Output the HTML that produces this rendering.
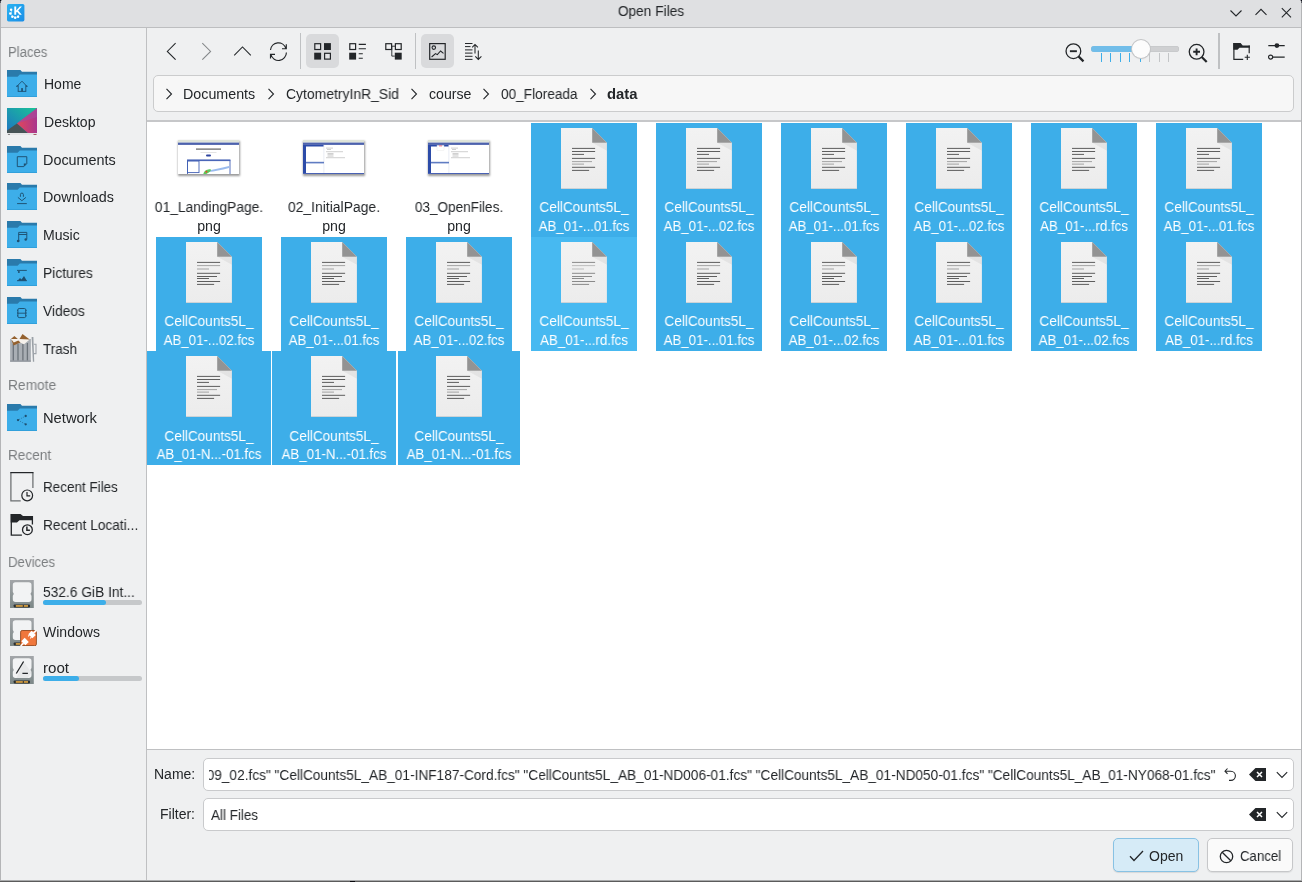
<!DOCTYPE html><html><head><meta charset="utf-8"><style>
html,body{margin:0;padding:0;width:1302px;height:882px;overflow:hidden;background:#eff0f1}
#w{position:relative;width:1302px;height:882px;overflow:hidden;font-family:"Liberation Sans",sans-serif}
.t{position:absolute;white-space:nowrap;line-height:20px;height:20px;font-size:14px;will-change:transform}
.r{position:absolute;display:block}
</style></head><body><div id="w">
<div class="r" style="left:0px;top:0px;width:1302px;height:882px;background:#eff0f1;"></div>
<div class="r" style="left:0px;top:0px;width:1302px;height:27px;background:#dfe0e2;"></div>
<div class="r" style="left:0px;top:27px;width:1302px;height:1px;background:#bdbec0;"></div>
<div class="r" style="left:0px;top:0px;width:1px;height:882px;background:#b4b5b7;"></div>
<div class="r" style="left:1301px;top:0px;width:1px;height:882px;background:#b4b5b7;"></div>
<div class="r" style="left:0px;top:880px;width:1302px;height:1px;background:#a9aaab;"></div>
<div class="r" style="left:0px;top:881px;width:1302px;height:1px;background:#5b5b5b;"></div>
<div class="r" style="left:0px;top:0px;width:1px;height:1px;background:#0b0c18;"></div>
<div class="r" style="left:1px;top:0px;width:1px;height:1px;background:#9a9ca0;"></div>
<div class="r" style="left:0px;top:1px;width:1px;height:2px;background:#55575d;"></div>
<div class="r" style="left:1301px;top:0px;width:1px;height:1px;background:#0b0c18;"></div>
<div class="r" style="left:1300px;top:0px;width:1px;height:1px;background:#9a9ca0;"></div>
<div class="r" style="left:1301px;top:1px;width:1px;height:2px;background:#55575d;"></div>
<div class="r" style="left:350px;top:881px;width:5px;height:1px;background:#08080c;"></div>
<div class="t" style="left:501px;width:300px;text-align:center;top:1px;color:#232629;font-weight:normal;transform:scaleX(0.9808);transform-origin:150px 0;">Open Files</div>
<svg class="r" style="left:7px;top:4px" width="18" height="18" viewBox="0 0 18 18"><defs><linearGradient id="kg" x1="0" y1="0" x2="1" y2="1"><stop offset="0" stop-color="#2bb4f2"/><stop offset="1" stop-color="#1a8de6"/></linearGradient></defs>
<rect x="0" y="0" width="17.4" height="17.4" rx="1.6" fill="url(#kg)"/>
<path d="M4.6 7.2A3.9 3.9 0 0 0 11.8 11" fill="none" stroke="#fff" stroke-width="0.9" opacity="0.6"/>
<circle cx="4.10" cy="5.83" r="1.25" fill="#fff"/><circle cx="3.28" cy="9.57" r="1.25" fill="#fff"/><circle cx="5.33" cy="12.80" r="1.25" fill="#fff"/><circle cx="8.20" cy="13.70" r="1.25" fill="#fff"/><circle cx="11.07" cy="12.80" r="1.25" fill="#fff"/>
<path d="M7.3 2.6h1.9v3.9l3.6-3.9h2.1L11.2 6.6l3.6 4.2h-2.2L10 7.7 9.2 8.5v2.3H7.3z" fill="#fff"/></svg>
<svg class="r" style="left:1228px;top:6px" width="16" height="16" viewBox="0 0 16 16"><path d="M2.5 4.5l5.5 5.5 5.5-5.5" fill="none" stroke="#232629" stroke-width="1.1"/></svg>
<svg class="r" style="left:1253px;top:4px" width="16" height="16" viewBox="0 0 16 16"><path d="M2.5 10.8l5.5-5.5 5.5 5.5" fill="none" stroke="#232629" stroke-width="1.1"/></svg>
<svg class="r" style="left:1278px;top:4px" width="16" height="16" viewBox="0 0 16 16"><path d="M3.8 4.2l9.2 9.2M13 4.2l-9.2 9.2" fill="none" stroke="#232629" stroke-width="1.1"/></svg>
<div class="r" style="left:146px;top:28px;width:1px;height:852px;background:#bfc0c2;"></div>
<div class="t" style="left:7.70px;top:42px;color:#7b7e80;font-weight:normal;transform:scaleX(0.9357);transform-origin:0 0;">Places</div>
<svg class="r" style="left:7px;top:70px" width="30" height="28" viewBox="0 0 30 28"><path d="M0 0h13.4l1.6 1.7H30V27H0z" fill="#2a7aab"/>
<path d="M0 6.7h10.6l2.2-2.2H30V27H0z" fill="#3daee9"/><rect x="0" y="26.3" width="30" height="0.7" fill="#2d9ad6"/><path d="M9.9 16.3L15 11.2l4.9 5.1M11.2 15.2v6.2M18.8 15.2v6.2M10.8 21.4h8.4" fill="none" stroke="#1e4f70" stroke-width="0.9"/><rect x="14.2" y="18.1" width="1.7" height="3.3" fill="#1e4f70"/><circle cx="10" cy="16.3" r="0.8" fill="#1e4f70"/><circle cx="19.8" cy="16.3" r="0.8" fill="#1e4f70"/></svg>
<svg class="r" style="left:7px;top:108px" width="30" height="28" viewBox="0 0 30 28"><defs><linearGradient id="dg" x1="0" y1="1" x2="1" y2="0"><stop offset="0" stop-color="#1e74c4"/><stop offset="1" stop-color="#19c496"/></linearGradient>
<linearGradient id="dp" x1="0" y1="0" x2="1" y2="0"><stop offset="0" stop-color="#e3475a"/><stop offset="1" stop-color="#a9368e"/></linearGradient></defs>
<rect width="30" height="25" fill="url(#dg)"/>
<path d="M30 0.3L9.9 15.6 20.7 25H30z" fill="url(#dp)"/>
<path d="M30 0.3L9.9 15.6 30 9z" fill="#a8489a" opacity="0.75"/>
<path d="M0 22.5L9.9 15.6 20.7 25H0z" fill="#475456"/>
<rect y="25" width="30" height="2" fill="#e4e5e6"/><rect x="1" y="26" width="2" height="1" fill="#888"/><rect x="26.5" y="26" width="3" height="1" fill="#a56"/></svg>
<svg class="r" style="left:7px;top:146px" width="30" height="28" viewBox="0 0 30 28"><path d="M0 0h13.4l1.6 1.7H30V27H0z" fill="#2a7aab"/>
<path d="M0 6.7h10.6l2.2-2.2H30V27H0z" fill="#3daee9"/><rect x="0" y="26.3" width="30" height="0.7" fill="#2d9ad6"/><path d="M10.3 10.7v9.9h6.5l3-3v-6.9M10.3 10.7h9.5" fill="none" stroke="#1e4f70" stroke-width="0.95"/><path d="M16.8 20.6v-3h3z" fill="#1e4f70"/></svg>
<svg class="r" style="left:7px;top:183px" width="30" height="28" viewBox="0 0 30 28"><path d="M0 0h13.4l1.6 1.7H30V27H0z" fill="#2a7aab"/>
<path d="M0 6.7h10.6l2.2-2.2H30V27H0z" fill="#3daee9"/><rect x="0" y="26.3" width="30" height="0.7" fill="#2d9ad6"/><path d="M13.4 13.8v-2.2a1.5 1.5 0 0 1 3 0v2.2M10.9 14.4l4 3.3 4-3.3M10.1 20.6h9.7" fill="none" stroke="#1e4f70" stroke-width="0.95"/></svg>
<svg class="r" style="left:7px;top:221px" width="30" height="28" viewBox="0 0 30 28"><path d="M0 0h13.4l1.6 1.7H30V27H0z" fill="#2a7aab"/>
<path d="M0 6.7h10.6l2.2-2.2H30V27H0z" fill="#3daee9"/><rect x="0" y="26.3" width="30" height="0.7" fill="#2d9ad6"/><path d="M11.7 20V11.4h8.1v7M11.7 13.5h8.1" fill="none" stroke="#1e4f70" stroke-width="0.95"/><circle cx="11.2" cy="20" r="1.35" fill="#1e4f70"/><circle cx="18.7" cy="18.5" r="1.25" fill="#1e4f70"/></svg>
<svg class="r" style="left:7px;top:259px" width="30" height="28" viewBox="0 0 30 28"><path d="M0 0h13.4l1.6 1.7H30V27H0z" fill="#2a7aab"/>
<path d="M0 6.7h10.6l2.2-2.2H30V27H0z" fill="#3daee9"/><rect x="0" y="26.3" width="30" height="0.7" fill="#2d9ad6"/><path d="M10 11.4h9.8M10 21.7h9.8" fill="none" stroke="#1e4f70" stroke-width="0.95"/><circle cx="11.9" cy="12.9" r="1" fill="#1e4f70"/><path d="M10.5 21.7l2.5-2.7 1.5 1.5 2.5-3.5 2.8 4.7z" fill="#1e4f70"/></svg>
<svg class="r" style="left:7px;top:297px" width="30" height="28" viewBox="0 0 30 28"><path d="M0 0h13.4l1.6 1.7H30V27H0z" fill="#2a7aab"/>
<path d="M0 6.7h10.6l2.2-2.2H30V27H0z" fill="#3daee9"/><rect x="0" y="26.3" width="30" height="0.7" fill="#2d9ad6"/><rect x="10.9" y="11.5" width="7.8" height="9.1" rx="1.3" fill="none" stroke="#1e4f70" stroke-width="0.95"/><path d="M10.9 16.2h7.8M10 13.3h1M10 16h1M10 18.8h1M18.8 13.3h1M18.8 16h1M18.8 18.8h1" stroke="#1e4f70" stroke-width="0.9"/></svg>
<svg class="r" style="left:9px;top:333px" width="28" height="30" viewBox="0 0 28 30"><path d="M1.1 6h20.8v22.6H1.1z" fill="#a9aeb4"/>
<path d="M4.3 11v16.5M9 11v16.5M13.9 11v16.5M18.4 10v17.5" stroke="#6c737a" stroke-width="1.3"/>
<rect x="1.1" y="27.6" width="20.8" height="1" fill="#858b92"/>
<path d="M22.6 4.1h1.8l0.8 24.7h-1.3z" fill="#9aa0a6"/>
<path d="M24.8 11.2h2.2v9.4h-2.2" fill="none" stroke="#9ea4aa" stroke-width="1.1"/>
<path d="M2 6l16-0.2 2.7 0.6-5.7 4.9-4-1.8-5.5 1.5-2.7-3.5z" fill="#f5f1ec"/>
<path d="M1.9 6l3.5-2.9 3.4 2.9z" fill="#94612f"/>
<path d="M10.5 5.9l3-4.8 7.2 5.3z" fill="#94612f"/>
<path d="M2.3 6.3l2.2 6.2 7-3.1-2.2-2-4.5 2.2z" fill="#94612f"/></svg>
<div class="t" style="left:43.60px;top:74px;color:#232629;font-weight:normal;transform:scaleX(1.0);transform-origin:0 0;">Home</div>
<div class="t" style="left:43.60px;top:112px;color:#232629;font-weight:normal;transform:scaleX(1.0019);transform-origin:0 0;">Desktop</div>
<div class="t" style="left:43.40px;top:150px;color:#232629;font-weight:normal;transform:scaleX(1.0282);transform-origin:0 0;">Documents</div>
<div class="t" style="left:43.40px;top:187px;color:#232629;font-weight:normal;transform:scaleX(1.0231);transform-origin:0 0;">Downloads</div>
<div class="t" style="left:43.40px;top:225px;color:#232629;font-weight:normal;transform:scaleX(1.0055);transform-origin:0 0;">Music</div>
<div class="t" style="left:43.40px;top:263px;color:#232629;font-weight:normal;transform:scaleX(0.9862);transform-origin:0 0;">Pictures</div>
<div class="t" style="left:43.20px;top:301px;color:#232629;font-weight:normal;transform:scaleX(0.9836);transform-origin:0 0;">Videos</div>
<div class="t" style="left:43.20px;top:339px;color:#232629;font-weight:normal;transform:scaleX(0.9632);transform-origin:0 0;">Trash</div>
<div class="t" style="left:7.90px;top:375px;color:#7b7e80;font-weight:normal;transform:scaleX(0.9837);transform-origin:0 0;">Remote</div>
<svg class="r" style="left:7px;top:404px" width="30" height="28" viewBox="0 0 30 28"><path d="M0 0h13.4l1.6 1.7H30V27H0z" fill="#2a7aab"/>
<path d="M0 6.7h10.6l2.2-2.2H30V27H0z" fill="#3daee9"/><rect x="0" y="26.3" width="30" height="0.7" fill="#2d9ad6"/><path d="M18.7 12L11 16.1l7.7 4.2" fill="none" stroke="#1e4f70" stroke-width="0.7" stroke-dasharray="1 1.2" opacity="0.8"/><circle cx="18.7" cy="12" r="1.15" fill="#1e4f70"/><circle cx="11" cy="16.1" r="1.15" fill="#1e4f70"/><circle cx="18.7" cy="20.3" r="1.15" fill="#1e4f70"/></svg>
<div class="t" style="left:43.40px;top:408px;color:#232629;font-weight:normal;transform:scaleX(1.0506);transform-origin:0 0;">Network</div>
<div class="t" style="left:7.70px;top:445px;color:#7b7e80;font-weight:normal;transform:scaleX(0.9707);transform-origin:0 0;">Recent</div>
<svg class="r" style="left:10px;top:472px" width="24" height="31" viewBox="0 0 24 31"><path d="M0.9 0.6V28.8H10.7M22.9 0.6V16" fill="none" stroke="#6b6e71" stroke-width="1.25"/>
<path d="M0.3 0.6H23.5" fill="none" stroke="#232629" stroke-width="1.25"/>
<circle cx="17.2" cy="23.4" r="5.4" fill="none" stroke="#232629" stroke-width="1.2"/><path d="M17 20V23.8H20.2" fill="none" stroke="#232629" stroke-width="1.2"/></svg>
<div class="t" style="left:43.40px;top:477px;color:#232629;font-weight:normal;transform:scaleX(0.9614);transform-origin:0 0;">Recent Files</div>
<svg class="r" style="left:10px;top:514px" width="24" height="23" viewBox="0 0 24 23"><path d="M0.7 0H10.5L13 2H23V6.2H9.5L7 8.5H0.7Z" fill="#232629"/>
<path d="M1.3 0V21.2H11.9M22.4 2V10.4" fill="none" stroke="#232629" stroke-width="1.3"/>
<circle cx="17.4" cy="15.7" r="4.9" fill="none" stroke="#232629" stroke-width="1.3"/><path d="M16.9 12.6V16.2H19.9" fill="none" stroke="#232629" stroke-width="1.5"/></svg>
<div class="t" style="left:43.40px;top:515px;color:#232629;font-weight:normal;transform:scaleX(0.9784);transform-origin:0 0;">Recent Locati...</div>
<div class="t" style="left:8.20px;top:552px;color:#7b7e80;font-weight:normal;transform:scaleX(0.9458);transform-origin:0 0;">Devices</div>
<svg class="r" style="left:10px;top:580px" width="28" height="28" viewBox="0 0 28 28"><defs><linearGradient id="dvg" x1="0" y1="0" x2="0" y2="1"><stop offset="0" stop-color="#a3a6a9"/><stop offset="1" stop-color="#7d8888"/></linearGradient></defs>
<rect x="0" y="0" width="23.8" height="28" fill="url(#dvg)"/>
<path d="M5.5 2.2h13.3a2.7 2.7 0 0 1 2.7 2.7v6.5c0 1-0.9 1.4-0.9 2.4s0.9 1.4 0.9 2.4v3a2.7 2.7 0 0 1-2.7 2.7H5.5a2.7 2.7 0 0 1-2.7-2.7v-3c0-1 0.9-1.4 0.9-2.4s-0.9-1.4-0.9-2.4V4.9a2.7 2.7 0 0 1 2.7-2.7z" fill="#f2f3f4"/>
<rect x="3.7" y="24.5" width="16.3" height="2.9" rx="0.8" fill="#2a2e30"/>
<rect x="5.8" y="25.1" width="7" height="1.7" fill="#d9a040"/><rect x="13.8" y="25.1" width="4.2" height="1.7" fill="#d9a040"/></svg>
<div class="t" style="left:43.40px;top:582px;color:#232629;font-weight:normal;transform:scaleX(0.9829);transform-origin:0 0;">532.6 GiB Int...</div>
<div class="r" style="left:43px;top:600px;width:99px;height:5px;background:#c6c8ca;border-radius:2.5px"></div>
<div class="r" style="left:43px;top:600px;width:62.5px;height:5px;background:#3daee9;border-radius:2.5px"></div>
<svg class="r" style="left:10px;top:618px" width="28" height="28" viewBox="0 0 28 28"><defs><linearGradient id="dvg" x1="0" y1="0" x2="0" y2="1"><stop offset="0" stop-color="#a3a6a9"/><stop offset="1" stop-color="#7d8888"/></linearGradient></defs>
<rect x="0" y="0" width="23.8" height="28" fill="url(#dvg)"/>
<path d="M5.5 2.2h13.3a2.7 2.7 0 0 1 2.7 2.7v6.5c0 1-0.9 1.4-0.9 2.4s0.9 1.4 0.9 2.4v3a2.7 2.7 0 0 1-2.7 2.7H5.5a2.7 2.7 0 0 1-2.7-2.7v-3c0-1 0.9-1.4 0.9-2.4s-0.9-1.4-0.9-2.4V4.9a2.7 2.7 0 0 1 2.7-2.7z" fill="#f2f3f4"/>
<rect x="3.7" y="24.5" width="16.3" height="2.9" rx="0.8" fill="#2a2e30"/>
<rect x="5.8" y="25.1" width="7" height="1.7" fill="#d9a040"/><rect x="13.8" y="25.1" width="4.2" height="1.7" fill="#d9a040"/><rect x="10.6" y="12.5" width="15.8" height="15.2" rx="1.6" fill="#f0773c" stroke="#93481d" stroke-width="0.9"/><g fill="#fff" transform="translate(18.5 20.1) rotate(45)"><rect x="-2.9" y="-7.4" width="5.8" height="4.8"/><rect x="-0.8" y="-11" width="1.6" height="4"/><rect x="-2" y="-2.7" width="1.1" height="1.7"/><rect x="0.9" y="-2.7" width="1.1" height="1.7"/><rect x="-2.9" y="2.5" width="5.8" height="4.8"/><rect x="-0.8" y="7.1" width="1.6" height="4"/></g></svg>
<div class="t" style="left:43.40px;top:622px;color:#232629;font-weight:normal;transform:scaleX(1.0018);transform-origin:0 0;">Windows</div>
<svg class="r" style="left:10px;top:656px" width="28" height="28" viewBox="0 0 28 28"><defs><linearGradient id="dvg" x1="0" y1="0" x2="0" y2="1"><stop offset="0" stop-color="#a3a6a9"/><stop offset="1" stop-color="#7d8888"/></linearGradient></defs>
<rect x="0" y="0" width="23.8" height="28" fill="url(#dvg)"/>
<path d="M5.5 2.2h13.3a2.7 2.7 0 0 1 2.7 2.7v6.5c0 1-0.9 1.4-0.9 2.4s0.9 1.4 0.9 2.4v3a2.7 2.7 0 0 1-2.7 2.7H5.5a2.7 2.7 0 0 1-2.7-2.7v-3c0-1 0.9-1.4 0.9-2.4s-0.9-1.4-0.9-2.4V4.9a2.7 2.7 0 0 1 2.7-2.7z" fill="#f2f3f4"/>
<rect x="3.7" y="24.5" width="16.3" height="2.9" rx="0.8" fill="#2a2e30"/>
<rect x="5.8" y="25.1" width="7" height="1.7" fill="#d9a040"/><rect x="13.8" y="25.1" width="4.2" height="1.7" fill="#d9a040"/><path d="M13.6 5.5L21.5 16.5 18 21.9H6.5z" fill="#000" opacity="0.045"/><path d="M13.6 5.5L6.3 17.5M12.4 17.3h5.5" stroke="#232629" stroke-width="1.3" fill="none"/></svg>
<div class="t" style="left:43.40px;top:658px;color:#232629;font-weight:normal;transform:scaleX(1.0788);transform-origin:0 0;">root</div>
<div class="r" style="left:43px;top:676px;width:99px;height:4.5px;background:#c6c8ca;border-radius:2.5px"></div>
<div class="r" style="left:43px;top:676px;width:35.5px;height:4.5px;background:#3daee9;border-radius:2.5px"></div>
<svg class="r" style="left:162px;top:42px" width="18" height="18" viewBox="0 0 18 18"><path d="M13.6 1.1L5.3 9.4l8.3 8.3" fill="none" stroke="#232629" stroke-width="1.05"/></svg>
<svg class="r" style="left:197px;top:42px" width="18" height="18" viewBox="0 0 18 18"><path d="M5.3 1.1l8.3 8.3-8.3 8.3" fill="none" stroke="#85888b" stroke-width="1.05"/></svg>
<svg class="r" style="left:232px;top:42px" width="20" height="18" viewBox="0 0 20 18"><path d="M2.2 13.3l8.3-8.3 8.3 8.3" fill="none" stroke="#232629" stroke-width="1.05"/></svg>
<svg class="r" style="left:266px;top:40px" width="24" height="22" viewBox="0 0 24 22"><path d="M4.5 10A7.9 7.9 0 0 1 19.9 8.4M20.3 4.2V8.7H16M20.4 12.5A7.9 7.9 0 0 1 4.9 14.7M4.5 18.5V14.3H9" fill="none" stroke="#232629" stroke-width="1.15"/></svg>
<div class="r" style="left:300px;top:33px;width:1px;height:36px;background:#bfc1c3;"></div>
<div class="r" style="left:306px;top:34px;width:33px;height:34px;background:#d9dadc;border-radius:5px"></div>
<svg class="r" style="left:314px;top:43px" width="18" height="18" viewBox="0 0 18 18"><rect x="0.8" y="0.7" width="5.8" height="5.8" fill="#e3e4e6" stroke="#232629" stroke-width="1.2"/><rect x="10" y="0.1" width="6.9" height="6.9" fill="#232629"/><rect x="0.2" y="9.7" width="6.9" height="6.9" fill="#232629"/><rect x="10.6" y="10.3" width="5.8" height="5.8" fill="#e3e4e6" stroke="#232629" stroke-width="1.2"/></svg>
<svg class="r" style="left:349px;top:43px" width="18" height="18" viewBox="0 0 18 18"><rect x="0.8" y="0.7" width="5.8" height="5.8" fill="none" stroke="#232629" stroke-width="1.2"/><rect x="0.2" y="9.7" width="6.9" height="6.9" fill="#232629"/><path d="M9.7 1.4h7.2M9.7 5.8h7.2M9.7 10.8h4.1M9.7 15.2h4.1" stroke="#232629" stroke-width="1.1"/></svg>
<svg class="r" style="left:385px;top:43px" width="18" height="18" viewBox="0 0 18 18"><rect x="0.8" y="0.7" width="5.8" height="5.8" fill="none" stroke="#232629" stroke-width="1.2"/><rect x="10.4" y="0.7" width="5.8" height="5.8" fill="none" stroke="#232629" stroke-width="1.2"/><rect x="9.8" y="9.7" width="6.9" height="6.9" fill="#232629"/><path d="M7 3.2h3M6.8 3.2v9.9h3" fill="none" stroke="#232629" stroke-width="0.9"/></svg>
<div class="r" style="left:415px;top:33px;width:1px;height:36px;background:#bfc1c3;"></div>
<div class="r" style="left:421px;top:34px;width:33px;height:34px;background:#d9dadc;border-radius:5px"></div>
<svg class="r" style="left:429px;top:43px" width="18" height="18" viewBox="0 0 18 18"><rect x="0.7" y="0.6" width="15.5" height="15.7" fill="none" stroke="#232629" stroke-width="1.2"/><circle cx="4.8" cy="4.6" r="1.75" fill="none" stroke="#232629" stroke-width="1.1"/><path d="M2.6 14l3.9-3.4 1.8 1 3.3-3.6 2.9 2.4" fill="none" stroke="#232629" stroke-width="1.05"/></svg>
<svg class="r" style="left:464px;top:43px" width="19" height="18" viewBox="0 0 19 18"><path d="M1 0.5h7.5M1 3.6h5.5M1 6.9h7.5M1 10.1h7.5M1 13.3h7.5M1 16.4h7.5" stroke="#232629" stroke-width="1"/><path d="M11 2v8.4M8.2 4.4L11 1.5l2.9 2.9M14.3 7.6v8.4M11.3 13.4l3 3 3.1-3" fill="none" stroke="#232629" stroke-width="1.05"/></svg>
<svg class="r" style="left:1064px;top:43px" width="21" height="21" viewBox="0 0 21 21"><circle cx="9.4" cy="8.2" r="7.35" fill="none" stroke="#232629" stroke-width="1.3"/><path d="M5.9 8.2h7" stroke="#232629" stroke-width="1.9"/><path d="M14.5 13.4l5 5" stroke="#232629" stroke-width="2.2"/></svg>
<svg class="r" style="left:1188px;top:43px" width="21" height="21" viewBox="0 0 21 21"><circle cx="8.6" cy="8.8" r="7.35" fill="none" stroke="#232629" stroke-width="1.3"/><path d="M5.2 8.8h6.8M8.6 5.4v6.8" stroke="#232629" stroke-width="1.9"/><path d="M13.7 14l5 5" stroke="#232629" stroke-width="2.2"/></svg>
<div class="r" style="left:1091px;top:46px;width:88px;height:6px;background:#cfd0d2;border-radius:3px;box-shadow:inset 0 0 0 0.5px #c2c3c5"></div>
<div class="r" style="left:1091px;top:46px;width:50px;height:6px;background:#71bde9;border-radius:3px"></div>
<div class="r" style="left:1101px;top:53px;width:1px;height:9px;background:#3daee9;"></div>
<div class="r" style="left:1110px;top:53px;width:1px;height:9px;background:#3daee9;"></div>
<div class="r" style="left:1120px;top:53px;width:1px;height:9px;background:#3daee9;"></div>
<div class="r" style="left:1129px;top:53px;width:1px;height:9px;background:#3daee9;"></div>
<div class="r" style="left:1140px;top:53px;width:1px;height:9px;background:#3daee9;"></div>
<div class="r" style="left:1149px;top:53px;width:1px;height:9px;background:#c3c5c7;"></div>
<div class="r" style="left:1159px;top:53px;width:1px;height:9px;background:#c3c5c7;"></div>
<div class="r" style="left:1168px;top:53px;width:1px;height:9px;background:#c3c5c7;"></div>
<div class="r" style="left:1131.5px;top:40px;width:18px;height:18px;background:#fcfcfc;border-radius:50%;box-shadow:0 0 0 1px #c4c5c7,0 1px 1.5px rgba(0,0,0,0.12)"></div>
<div class="r" style="left:1218px;top:33px;width:2px;height:36px;background:#bfc1c3;"></div>
<svg class="r" style="left:1233px;top:43px" width="19" height="18" viewBox="0 0 19 18"><path d="M0.3 0H7.6L9.7 2.4H16.8V4.7H6.5L4.5 6.8H0.3Z" fill="#232629"/><path d="M0.9 0V16.3H10.2M16.2 2.4V10.2" fill="none" stroke="#232629" stroke-width="1.2"/><path d="M14.3 11.7V16.9M11.7 14.3H16.9" stroke="#232629" stroke-width="1.1"/></svg>
<svg class="r" style="left:1267px;top:43px" width="19" height="18" viewBox="0 0 19 18"><path d="M1.3 2.6h16.4M5.7 14.1h12" stroke="#232629" stroke-width="1.1"/><circle cx="9.9" cy="2.6" r="2.4" fill="#232629"/><circle cx="3.6" cy="14.1" r="2.05" fill="#eff0f1" stroke="#232629" stroke-width="1.15"/></svg>
<div class="r" style="left:153px;top:75px;width:1141px;height:37px;background:#f7f7f7;box-sizing:border-box;border:1px solid #cbcccd;border-radius:5px"></div>
<svg class="r" style="left:164px;top:88px" width="10" height="12" viewBox="0 0 10 12"><path d="M2.5 0.8l5 5.2-5 5.2" fill="none" stroke="#232629" stroke-width="1.1"/></svg>
<svg class="r" style="left:266px;top:88px" width="10" height="12" viewBox="0 0 10 12"><path d="M2.5 0.8l5 5.2-5 5.2" fill="none" stroke="#232629" stroke-width="1.1"/></svg>
<svg class="r" style="left:409px;top:88px" width="10" height="12" viewBox="0 0 10 12"><path d="M2.5 0.8l5 5.2-5 5.2" fill="none" stroke="#232629" stroke-width="1.1"/></svg>
<svg class="r" style="left:481px;top:88px" width="10" height="12" viewBox="0 0 10 12"><path d="M2.5 0.8l5 5.2-5 5.2" fill="none" stroke="#232629" stroke-width="1.1"/></svg>
<svg class="r" style="left:588px;top:88px" width="10" height="12" viewBox="0 0 10 12"><path d="M2.5 0.8l5 5.2-5 5.2" fill="none" stroke="#232629" stroke-width="1.1"/></svg>
<div class="t" style="left:183.40px;top:84px;color:#232629;font-weight:normal;transform:scaleX(1.0198);transform-origin:0 0;">Documents</div>
<div class="t" style="left:286.00px;top:84px;color:#232629;font-weight:normal;transform:scaleX(0.9947);transform-origin:0 0;">CytometryInR_Sid</div>
<div class="t" style="left:428.60px;top:84px;color:#232629;font-weight:normal;transform:scaleX(1.0095);transform-origin:0 0;">course</div>
<div class="t" style="left:501.00px;top:84px;color:#232629;font-weight:normal;transform:scaleX(0.9746);transform-origin:0 0;">00_Floreada</div>
<div class="t" style="left:607.00px;top:84px;color:#232629;font-weight:bold;transform:scaleX(1.0588);transform-origin:0 0;">data</div>
<div class="r" style="left:147px;top:120px;width:1154px;height:2px;background:#c6c7c9;"></div>
<div class="r" style="left:147px;top:122px;width:1154px;height:627px;background:#ffffff;"></div>
<div class="r" style="left:147px;top:749px;width:1154px;height:1px;background:#bfc0c2;"></div>
<div class="t" style="left:59px;width:300px;text-align:center;top:197px;color:#232629;font-weight:normal;transform:scaleX(0.9863);transform-origin:150px 0;">01_LandingPage.</div>
<div class="t" style="left:59px;width:300px;text-align:center;top:216px;color:#232629;font-weight:normal;transform:scaleX(1.0128);transform-origin:150px 0;">png</div>
<div class="t" style="left:184px;width:300px;text-align:center;top:197px;color:#232629;font-weight:normal;transform:scaleX(0.9946);transform-origin:150px 0;">02_InitialPage.</div>
<div class="t" style="left:184px;width:300px;text-align:center;top:216px;color:#232629;font-weight:normal;transform:scaleX(1.0128);transform-origin:150px 0;">png</div>
<div class="t" style="left:309px;width:300px;text-align:center;top:197px;color:#232629;font-weight:normal;transform:scaleX(0.9682);transform-origin:150px 0;">03_OpenFiles.</div>
<div class="t" style="left:309px;width:300px;text-align:center;top:216px;color:#232629;font-weight:normal;transform:scaleX(1.0128);transform-origin:150px 0;">png</div>
<div class="r" style="left:531px;top:123px;width:106px;height:114px;background:#3daee9;"></div>
<svg class="r" style="left:561px;top:128px" width="47" height="62" viewBox="0 0 47 62"><defs><linearGradient id="pg" x1="0" y1="0" x2="0" y2="1"><stop offset="0" stop-color="#f2f2f2"/><stop offset="1" stop-color="#ececec"/></linearGradient></defs>
<path d="M0 0h31.2l14.7 14.7V60.7H0z" fill="url(#pg)"/>
<path d="M31.2 14.7h14.7v8z" fill="#000" opacity="0.05"/>
<path d="M31.2 0v14.7h14.7z" fill="#939393"/>
<rect x="0" y="60" width="45.9" height="0.7" fill="#d2cfcf"/><rect x="11" y="19.9" width="23.1" height="1" fill="#5e5e5e"/><rect x="11" y="23.0" width="23.1" height="1" fill="#5e5e5e"/><rect x="11" y="25.9" width="12" height="1" fill="#5e5e5e"/><rect x="11" y="29.9" width="23.1" height="1" fill="#5e5e5e"/><rect x="11" y="33.1" width="20" height="1" fill="#a3a3a3"/><rect x="11" y="35.6" width="12" height="1" fill="#a3a3a3"/><rect x="11" y="38.8" width="23.1" height="1" fill="#5e5e5e"/><rect x="11" y="41.9" width="17.1" height="1" fill="#5e5e5e"/></svg>
<div class="t" style="left:434px;width:300px;text-align:center;top:197px;color:#fff;font-weight:normal;transform:scaleX(0.9696);transform-origin:150px 0;">CellCounts5L_</div>
<div class="t" style="left:434px;width:300px;text-align:center;top:216px;color:#fff;font-weight:normal;transform:scaleX(0.9488);transform-origin:150px 0;">AB_01-...01.fcs</div>
<div class="r" style="left:656px;top:123px;width:106px;height:114px;background:#3daee9;"></div>
<svg class="r" style="left:686px;top:128px" width="47" height="62" viewBox="0 0 47 62"><defs><linearGradient id="pg" x1="0" y1="0" x2="0" y2="1"><stop offset="0" stop-color="#f2f2f2"/><stop offset="1" stop-color="#ececec"/></linearGradient></defs>
<path d="M0 0h31.2l14.7 14.7V60.7H0z" fill="url(#pg)"/>
<path d="M31.2 14.7h14.7v8z" fill="#000" opacity="0.05"/>
<path d="M31.2 0v14.7h14.7z" fill="#939393"/>
<rect x="0" y="60" width="45.9" height="0.7" fill="#d2cfcf"/><rect x="11" y="19.9" width="23.1" height="1" fill="#5e5e5e"/><rect x="11" y="23.0" width="23.1" height="1" fill="#5e5e5e"/><rect x="11" y="25.9" width="12" height="1" fill="#5e5e5e"/><rect x="11" y="29.9" width="23.1" height="1" fill="#5e5e5e"/><rect x="11" y="33.1" width="20" height="1" fill="#a3a3a3"/><rect x="11" y="35.6" width="12" height="1" fill="#a3a3a3"/><rect x="11" y="38.8" width="23.1" height="1" fill="#5e5e5e"/><rect x="11" y="41.9" width="17.1" height="1" fill="#5e5e5e"/></svg>
<div class="t" style="left:559px;width:300px;text-align:center;top:197px;color:#fff;font-weight:normal;transform:scaleX(0.9696);transform-origin:150px 0;">CellCounts5L_</div>
<div class="t" style="left:559px;width:300px;text-align:center;top:216px;color:#fff;font-weight:normal;transform:scaleX(0.9488);transform-origin:150px 0;">AB_01-...02.fcs</div>
<div class="r" style="left:781px;top:123px;width:106px;height:114px;background:#3daee9;"></div>
<svg class="r" style="left:811px;top:128px" width="47" height="62" viewBox="0 0 47 62"><defs><linearGradient id="pg" x1="0" y1="0" x2="0" y2="1"><stop offset="0" stop-color="#f2f2f2"/><stop offset="1" stop-color="#ececec"/></linearGradient></defs>
<path d="M0 0h31.2l14.7 14.7V60.7H0z" fill="url(#pg)"/>
<path d="M31.2 14.7h14.7v8z" fill="#000" opacity="0.05"/>
<path d="M31.2 0v14.7h14.7z" fill="#939393"/>
<rect x="0" y="60" width="45.9" height="0.7" fill="#d2cfcf"/><rect x="11" y="19.9" width="23.1" height="1" fill="#5e5e5e"/><rect x="11" y="23.0" width="23.1" height="1" fill="#5e5e5e"/><rect x="11" y="25.9" width="12" height="1" fill="#5e5e5e"/><rect x="11" y="29.9" width="23.1" height="1" fill="#5e5e5e"/><rect x="11" y="33.1" width="20" height="1" fill="#a3a3a3"/><rect x="11" y="35.6" width="12" height="1" fill="#a3a3a3"/><rect x="11" y="38.8" width="23.1" height="1" fill="#5e5e5e"/><rect x="11" y="41.9" width="17.1" height="1" fill="#5e5e5e"/></svg>
<div class="t" style="left:684px;width:300px;text-align:center;top:197px;color:#fff;font-weight:normal;transform:scaleX(0.9696);transform-origin:150px 0;">CellCounts5L_</div>
<div class="t" style="left:684px;width:300px;text-align:center;top:216px;color:#fff;font-weight:normal;transform:scaleX(0.9488);transform-origin:150px 0;">AB_01-...01.fcs</div>
<div class="r" style="left:906px;top:123px;width:106px;height:114px;background:#3daee9;"></div>
<svg class="r" style="left:936px;top:128px" width="47" height="62" viewBox="0 0 47 62"><defs><linearGradient id="pg" x1="0" y1="0" x2="0" y2="1"><stop offset="0" stop-color="#f2f2f2"/><stop offset="1" stop-color="#ececec"/></linearGradient></defs>
<path d="M0 0h31.2l14.7 14.7V60.7H0z" fill="url(#pg)"/>
<path d="M31.2 14.7h14.7v8z" fill="#000" opacity="0.05"/>
<path d="M31.2 0v14.7h14.7z" fill="#939393"/>
<rect x="0" y="60" width="45.9" height="0.7" fill="#d2cfcf"/><rect x="11" y="19.9" width="23.1" height="1" fill="#5e5e5e"/><rect x="11" y="23.0" width="23.1" height="1" fill="#5e5e5e"/><rect x="11" y="25.9" width="12" height="1" fill="#5e5e5e"/><rect x="11" y="29.9" width="23.1" height="1" fill="#5e5e5e"/><rect x="11" y="33.1" width="20" height="1" fill="#a3a3a3"/><rect x="11" y="35.6" width="12" height="1" fill="#a3a3a3"/><rect x="11" y="38.8" width="23.1" height="1" fill="#5e5e5e"/><rect x="11" y="41.9" width="17.1" height="1" fill="#5e5e5e"/></svg>
<div class="t" style="left:809px;width:300px;text-align:center;top:197px;color:#fff;font-weight:normal;transform:scaleX(0.9696);transform-origin:150px 0;">CellCounts5L_</div>
<div class="t" style="left:809px;width:300px;text-align:center;top:216px;color:#fff;font-weight:normal;transform:scaleX(0.9488);transform-origin:150px 0;">AB_01-...02.fcs</div>
<div class="r" style="left:1031px;top:123px;width:106px;height:114px;background:#3daee9;"></div>
<svg class="r" style="left:1061px;top:128px" width="47" height="62" viewBox="0 0 47 62"><defs><linearGradient id="pg" x1="0" y1="0" x2="0" y2="1"><stop offset="0" stop-color="#f2f2f2"/><stop offset="1" stop-color="#ececec"/></linearGradient></defs>
<path d="M0 0h31.2l14.7 14.7V60.7H0z" fill="url(#pg)"/>
<path d="M31.2 14.7h14.7v8z" fill="#000" opacity="0.05"/>
<path d="M31.2 0v14.7h14.7z" fill="#939393"/>
<rect x="0" y="60" width="45.9" height="0.7" fill="#d2cfcf"/><rect x="11" y="19.9" width="23.1" height="1" fill="#5e5e5e"/><rect x="11" y="23.0" width="23.1" height="1" fill="#5e5e5e"/><rect x="11" y="25.9" width="12" height="1" fill="#5e5e5e"/><rect x="11" y="29.9" width="23.1" height="1" fill="#5e5e5e"/><rect x="11" y="33.1" width="20" height="1" fill="#a3a3a3"/><rect x="11" y="35.6" width="12" height="1" fill="#a3a3a3"/><rect x="11" y="38.8" width="23.1" height="1" fill="#5e5e5e"/><rect x="11" y="41.9" width="17.1" height="1" fill="#5e5e5e"/></svg>
<div class="t" style="left:934px;width:300px;text-align:center;top:197px;color:#fff;font-weight:normal;transform:scaleX(0.9696);transform-origin:150px 0;">CellCounts5L_</div>
<div class="t" style="left:934px;width:300px;text-align:center;top:216px;color:#fff;font-weight:normal;transform:scaleX(0.9488);transform-origin:150px 0;">AB_01-...rd.fcs</div>
<div class="r" style="left:1156px;top:123px;width:106px;height:114px;background:#3daee9;"></div>
<svg class="r" style="left:1186px;top:128px" width="47" height="62" viewBox="0 0 47 62"><defs><linearGradient id="pg" x1="0" y1="0" x2="0" y2="1"><stop offset="0" stop-color="#f2f2f2"/><stop offset="1" stop-color="#ececec"/></linearGradient></defs>
<path d="M0 0h31.2l14.7 14.7V60.7H0z" fill="url(#pg)"/>
<path d="M31.2 14.7h14.7v8z" fill="#000" opacity="0.05"/>
<path d="M31.2 0v14.7h14.7z" fill="#939393"/>
<rect x="0" y="60" width="45.9" height="0.7" fill="#d2cfcf"/><rect x="11" y="19.9" width="23.1" height="1" fill="#5e5e5e"/><rect x="11" y="23.0" width="23.1" height="1" fill="#5e5e5e"/><rect x="11" y="25.9" width="12" height="1" fill="#5e5e5e"/><rect x="11" y="29.9" width="23.1" height="1" fill="#5e5e5e"/><rect x="11" y="33.1" width="20" height="1" fill="#a3a3a3"/><rect x="11" y="35.6" width="12" height="1" fill="#a3a3a3"/><rect x="11" y="38.8" width="23.1" height="1" fill="#5e5e5e"/><rect x="11" y="41.9" width="17.1" height="1" fill="#5e5e5e"/></svg>
<div class="t" style="left:1059px;width:300px;text-align:center;top:197px;color:#fff;font-weight:normal;transform:scaleX(0.9696);transform-origin:150px 0;">CellCounts5L_</div>
<div class="t" style="left:1059px;width:300px;text-align:center;top:216px;color:#fff;font-weight:normal;transform:scaleX(0.9488);transform-origin:150px 0;">AB_01-...01.fcs</div>
<div class="r" style="left:156px;top:237px;width:106px;height:114px;background:#3daee9;"></div>
<svg class="r" style="left:186px;top:242px" width="47" height="62" viewBox="0 0 47 62"><defs><linearGradient id="pg" x1="0" y1="0" x2="0" y2="1"><stop offset="0" stop-color="#f2f2f2"/><stop offset="1" stop-color="#ececec"/></linearGradient></defs>
<path d="M0 0h31.2l14.7 14.7V60.7H0z" fill="url(#pg)"/>
<path d="M31.2 14.7h14.7v8z" fill="#000" opacity="0.05"/>
<path d="M31.2 0v14.7h14.7z" fill="#939393"/>
<rect x="0" y="60" width="45.9" height="0.7" fill="#d2cfcf"/><rect x="11" y="19.9" width="23.1" height="1" fill="#5e5e5e"/><rect x="11" y="23.1" width="23.1" height="1" fill="#a3a3a3"/><rect x="11" y="26.5" width="12" height="1" fill="#a3a3a3"/><rect x="11" y="30.8" width="23.1" height="1" fill="#5e5e5e"/><rect x="11" y="34.0" width="20" height="1" fill="#5e5e5e"/><rect x="11" y="36.0" width="12" height="1" fill="#5e5e5e"/><rect x="11" y="39.0" width="23.1" height="1" fill="#5e5e5e"/><rect x="11" y="41.9" width="17.1" height="1" fill="#5e5e5e"/></svg>
<div class="t" style="left:59px;width:300px;text-align:center;top:311px;color:#fff;font-weight:normal;transform:scaleX(0.9696);transform-origin:150px 0;">CellCounts5L_</div>
<div class="t" style="left:59px;width:300px;text-align:center;top:330px;color:#fff;font-weight:normal;transform:scaleX(0.9488);transform-origin:150px 0;">AB_01-...02.fcs</div>
<div class="r" style="left:281px;top:237px;width:106px;height:114px;background:#3daee9;"></div>
<svg class="r" style="left:311px;top:242px" width="47" height="62" viewBox="0 0 47 62"><defs><linearGradient id="pg" x1="0" y1="0" x2="0" y2="1"><stop offset="0" stop-color="#f2f2f2"/><stop offset="1" stop-color="#ececec"/></linearGradient></defs>
<path d="M0 0h31.2l14.7 14.7V60.7H0z" fill="url(#pg)"/>
<path d="M31.2 14.7h14.7v8z" fill="#000" opacity="0.05"/>
<path d="M31.2 0v14.7h14.7z" fill="#939393"/>
<rect x="0" y="60" width="45.9" height="0.7" fill="#d2cfcf"/><rect x="11" y="19.9" width="23.1" height="1" fill="#5e5e5e"/><rect x="11" y="23.1" width="23.1" height="1" fill="#a3a3a3"/><rect x="11" y="26.5" width="12" height="1" fill="#a3a3a3"/><rect x="11" y="30.8" width="23.1" height="1" fill="#5e5e5e"/><rect x="11" y="34.0" width="20" height="1" fill="#5e5e5e"/><rect x="11" y="36.0" width="12" height="1" fill="#5e5e5e"/><rect x="11" y="39.0" width="23.1" height="1" fill="#5e5e5e"/><rect x="11" y="41.9" width="17.1" height="1" fill="#5e5e5e"/></svg>
<div class="t" style="left:184px;width:300px;text-align:center;top:311px;color:#fff;font-weight:normal;transform:scaleX(0.9696);transform-origin:150px 0;">CellCounts5L_</div>
<div class="t" style="left:184px;width:300px;text-align:center;top:330px;color:#fff;font-weight:normal;transform:scaleX(0.9488);transform-origin:150px 0;">AB_01-...01.fcs</div>
<div class="r" style="left:406px;top:237px;width:106px;height:114px;background:#3daee9;"></div>
<svg class="r" style="left:436px;top:242px" width="47" height="62" viewBox="0 0 47 62"><defs><linearGradient id="pg" x1="0" y1="0" x2="0" y2="1"><stop offset="0" stop-color="#f2f2f2"/><stop offset="1" stop-color="#ececec"/></linearGradient></defs>
<path d="M0 0h31.2l14.7 14.7V60.7H0z" fill="url(#pg)"/>
<path d="M31.2 14.7h14.7v8z" fill="#000" opacity="0.05"/>
<path d="M31.2 0v14.7h14.7z" fill="#939393"/>
<rect x="0" y="60" width="45.9" height="0.7" fill="#d2cfcf"/><rect x="11" y="19.9" width="23.1" height="1" fill="#5e5e5e"/><rect x="11" y="23.1" width="23.1" height="1" fill="#a3a3a3"/><rect x="11" y="26.5" width="12" height="1" fill="#a3a3a3"/><rect x="11" y="30.8" width="23.1" height="1" fill="#5e5e5e"/><rect x="11" y="34.0" width="20" height="1" fill="#5e5e5e"/><rect x="11" y="36.0" width="12" height="1" fill="#5e5e5e"/><rect x="11" y="39.0" width="23.1" height="1" fill="#5e5e5e"/><rect x="11" y="41.9" width="17.1" height="1" fill="#5e5e5e"/></svg>
<div class="t" style="left:309px;width:300px;text-align:center;top:311px;color:#fff;font-weight:normal;transform:scaleX(0.9696);transform-origin:150px 0;">CellCounts5L_</div>
<div class="t" style="left:309px;width:300px;text-align:center;top:330px;color:#fff;font-weight:normal;transform:scaleX(0.9488);transform-origin:150px 0;">AB_01-...02.fcs</div>
<div class="r" style="left:531px;top:237px;width:106px;height:114px;background:#47b9f1;"></div>
<svg class="r" style="left:561px;top:242px" width="47" height="62" viewBox="0 0 47 62"><defs><linearGradient id="pg" x1="0" y1="0" x2="0" y2="1"><stop offset="0" stop-color="#f2f2f2"/><stop offset="1" stop-color="#ececec"/></linearGradient></defs>
<path d="M0 0h31.2l14.7 14.7V60.7H0z" fill="url(#pg)"/>
<path d="M31.2 14.7h14.7v8z" fill="#000" opacity="0.05"/>
<path d="M31.2 0v14.7h14.7z" fill="#939393"/>
<rect x="0" y="60" width="45.9" height="0.7" fill="#d2cfcf"/><rect x="11" y="19.9" width="23.1" height="1" fill="#8a8a8a"/><rect x="11" y="23.1" width="23.1" height="1" fill="#bdbdbd"/><rect x="11" y="26.5" width="12" height="1" fill="#bdbdbd"/><rect x="11" y="30.8" width="23.1" height="1" fill="#8a8a8a"/><rect x="11" y="34.0" width="20" height="1" fill="#8a8a8a"/><rect x="11" y="36.0" width="12" height="1" fill="#8a8a8a"/><rect x="11" y="39.0" width="23.1" height="1" fill="#8a8a8a"/><rect x="11" y="41.9" width="17.1" height="1" fill="#8a8a8a"/></svg>
<div class="t" style="left:434px;width:300px;text-align:center;top:311px;color:#fff;font-weight:normal;transform:scaleX(0.9696);transform-origin:150px 0;">CellCounts5L_</div>
<div class="t" style="left:434px;width:300px;text-align:center;top:330px;color:#fff;font-weight:normal;transform:scaleX(0.9488);transform-origin:150px 0;">AB_01-...rd.fcs</div>
<div class="r" style="left:656px;top:237px;width:106px;height:114px;background:#3daee9;"></div>
<svg class="r" style="left:686px;top:242px" width="47" height="62" viewBox="0 0 47 62"><defs><linearGradient id="pg" x1="0" y1="0" x2="0" y2="1"><stop offset="0" stop-color="#f2f2f2"/><stop offset="1" stop-color="#ececec"/></linearGradient></defs>
<path d="M0 0h31.2l14.7 14.7V60.7H0z" fill="url(#pg)"/>
<path d="M31.2 14.7h14.7v8z" fill="#000" opacity="0.05"/>
<path d="M31.2 0v14.7h14.7z" fill="#939393"/>
<rect x="0" y="60" width="45.9" height="0.7" fill="#d2cfcf"/><rect x="11" y="19.9" width="23.1" height="1" fill="#5e5e5e"/><rect x="11" y="23.1" width="23.1" height="1" fill="#a3a3a3"/><rect x="11" y="26.5" width="12" height="1" fill="#a3a3a3"/><rect x="11" y="30.8" width="23.1" height="1" fill="#5e5e5e"/><rect x="11" y="34.0" width="20" height="1" fill="#5e5e5e"/><rect x="11" y="36.0" width="12" height="1" fill="#5e5e5e"/><rect x="11" y="39.0" width="23.1" height="1" fill="#5e5e5e"/><rect x="11" y="41.9" width="17.1" height="1" fill="#5e5e5e"/></svg>
<div class="t" style="left:559px;width:300px;text-align:center;top:311px;color:#fff;font-weight:normal;transform:scaleX(0.9696);transform-origin:150px 0;">CellCounts5L_</div>
<div class="t" style="left:559px;width:300px;text-align:center;top:330px;color:#fff;font-weight:normal;transform:scaleX(0.9488);transform-origin:150px 0;">AB_01-...01.fcs</div>
<div class="r" style="left:781px;top:237px;width:106px;height:114px;background:#3daee9;"></div>
<svg class="r" style="left:811px;top:242px" width="47" height="62" viewBox="0 0 47 62"><defs><linearGradient id="pg" x1="0" y1="0" x2="0" y2="1"><stop offset="0" stop-color="#f2f2f2"/><stop offset="1" stop-color="#ececec"/></linearGradient></defs>
<path d="M0 0h31.2l14.7 14.7V60.7H0z" fill="url(#pg)"/>
<path d="M31.2 14.7h14.7v8z" fill="#000" opacity="0.05"/>
<path d="M31.2 0v14.7h14.7z" fill="#939393"/>
<rect x="0" y="60" width="45.9" height="0.7" fill="#d2cfcf"/><rect x="11" y="19.9" width="23.1" height="1" fill="#5e5e5e"/><rect x="11" y="23.1" width="23.1" height="1" fill="#a3a3a3"/><rect x="11" y="26.5" width="12" height="1" fill="#a3a3a3"/><rect x="11" y="30.8" width="23.1" height="1" fill="#5e5e5e"/><rect x="11" y="34.0" width="20" height="1" fill="#5e5e5e"/><rect x="11" y="36.0" width="12" height="1" fill="#5e5e5e"/><rect x="11" y="39.0" width="23.1" height="1" fill="#5e5e5e"/><rect x="11" y="41.9" width="17.1" height="1" fill="#5e5e5e"/></svg>
<div class="t" style="left:684px;width:300px;text-align:center;top:311px;color:#fff;font-weight:normal;transform:scaleX(0.9696);transform-origin:150px 0;">CellCounts5L_</div>
<div class="t" style="left:684px;width:300px;text-align:center;top:330px;color:#fff;font-weight:normal;transform:scaleX(0.9488);transform-origin:150px 0;">AB_01-...02.fcs</div>
<div class="r" style="left:906px;top:237px;width:106px;height:114px;background:#3daee9;"></div>
<svg class="r" style="left:936px;top:242px" width="47" height="62" viewBox="0 0 47 62"><defs><linearGradient id="pg" x1="0" y1="0" x2="0" y2="1"><stop offset="0" stop-color="#f2f2f2"/><stop offset="1" stop-color="#ececec"/></linearGradient></defs>
<path d="M0 0h31.2l14.7 14.7V60.7H0z" fill="url(#pg)"/>
<path d="M31.2 14.7h14.7v8z" fill="#000" opacity="0.05"/>
<path d="M31.2 0v14.7h14.7z" fill="#939393"/>
<rect x="0" y="60" width="45.9" height="0.7" fill="#d2cfcf"/><rect x="11" y="19.9" width="23.1" height="1" fill="#5e5e5e"/><rect x="11" y="23.1" width="23.1" height="1" fill="#a3a3a3"/><rect x="11" y="26.5" width="12" height="1" fill="#a3a3a3"/><rect x="11" y="30.8" width="23.1" height="1" fill="#5e5e5e"/><rect x="11" y="34.0" width="20" height="1" fill="#5e5e5e"/><rect x="11" y="36.0" width="12" height="1" fill="#5e5e5e"/><rect x="11" y="39.0" width="23.1" height="1" fill="#5e5e5e"/><rect x="11" y="41.9" width="17.1" height="1" fill="#5e5e5e"/></svg>
<div class="t" style="left:809px;width:300px;text-align:center;top:311px;color:#fff;font-weight:normal;transform:scaleX(0.9696);transform-origin:150px 0;">CellCounts5L_</div>
<div class="t" style="left:809px;width:300px;text-align:center;top:330px;color:#fff;font-weight:normal;transform:scaleX(0.9488);transform-origin:150px 0;">AB_01-...01.fcs</div>
<div class="r" style="left:1031px;top:237px;width:106px;height:114px;background:#3daee9;"></div>
<svg class="r" style="left:1061px;top:242px" width="47" height="62" viewBox="0 0 47 62"><defs><linearGradient id="pg" x1="0" y1="0" x2="0" y2="1"><stop offset="0" stop-color="#f2f2f2"/><stop offset="1" stop-color="#ececec"/></linearGradient></defs>
<path d="M0 0h31.2l14.7 14.7V60.7H0z" fill="url(#pg)"/>
<path d="M31.2 14.7h14.7v8z" fill="#000" opacity="0.05"/>
<path d="M31.2 0v14.7h14.7z" fill="#939393"/>
<rect x="0" y="60" width="45.9" height="0.7" fill="#d2cfcf"/><rect x="11" y="19.9" width="23.1" height="1" fill="#5e5e5e"/><rect x="11" y="23.1" width="23.1" height="1" fill="#a3a3a3"/><rect x="11" y="26.5" width="12" height="1" fill="#a3a3a3"/><rect x="11" y="30.8" width="23.1" height="1" fill="#5e5e5e"/><rect x="11" y="34.0" width="20" height="1" fill="#5e5e5e"/><rect x="11" y="36.0" width="12" height="1" fill="#5e5e5e"/><rect x="11" y="39.0" width="23.1" height="1" fill="#5e5e5e"/><rect x="11" y="41.9" width="17.1" height="1" fill="#5e5e5e"/></svg>
<div class="t" style="left:934px;width:300px;text-align:center;top:311px;color:#fff;font-weight:normal;transform:scaleX(0.9696);transform-origin:150px 0;">CellCounts5L_</div>
<div class="t" style="left:934px;width:300px;text-align:center;top:330px;color:#fff;font-weight:normal;transform:scaleX(0.9488);transform-origin:150px 0;">AB_01-...02.fcs</div>
<div class="r" style="left:1156px;top:237px;width:106px;height:114px;background:#3daee9;"></div>
<svg class="r" style="left:1186px;top:242px" width="47" height="62" viewBox="0 0 47 62"><defs><linearGradient id="pg" x1="0" y1="0" x2="0" y2="1"><stop offset="0" stop-color="#f2f2f2"/><stop offset="1" stop-color="#ececec"/></linearGradient></defs>
<path d="M0 0h31.2l14.7 14.7V60.7H0z" fill="url(#pg)"/>
<path d="M31.2 14.7h14.7v8z" fill="#000" opacity="0.05"/>
<path d="M31.2 0v14.7h14.7z" fill="#939393"/>
<rect x="0" y="60" width="45.9" height="0.7" fill="#d2cfcf"/><rect x="11" y="19.9" width="23.1" height="1" fill="#5e5e5e"/><rect x="11" y="23.1" width="23.1" height="1" fill="#a3a3a3"/><rect x="11" y="26.5" width="12" height="1" fill="#a3a3a3"/><rect x="11" y="30.8" width="23.1" height="1" fill="#5e5e5e"/><rect x="11" y="34.0" width="20" height="1" fill="#5e5e5e"/><rect x="11" y="36.0" width="12" height="1" fill="#5e5e5e"/><rect x="11" y="39.0" width="23.1" height="1" fill="#5e5e5e"/><rect x="11" y="41.9" width="17.1" height="1" fill="#5e5e5e"/></svg>
<div class="t" style="left:1059px;width:300px;text-align:center;top:311px;color:#fff;font-weight:normal;transform:scaleX(0.9696);transform-origin:150px 0;">CellCounts5L_</div>
<div class="t" style="left:1059px;width:300px;text-align:center;top:330px;color:#fff;font-weight:normal;transform:scaleX(0.9488);transform-origin:150px 0;">AB_01-...rd.fcs</div>
<div class="r" style="left:147px;top:351px;width:124px;height:114px;background:#3daee9;"></div>
<svg class="r" style="left:186px;top:356px" width="47" height="62" viewBox="0 0 47 62"><defs><linearGradient id="pg" x1="0" y1="0" x2="0" y2="1"><stop offset="0" stop-color="#f2f2f2"/><stop offset="1" stop-color="#ececec"/></linearGradient></defs>
<path d="M0 0h31.2l14.7 14.7V60.7H0z" fill="url(#pg)"/>
<path d="M31.2 14.7h14.7v8z" fill="#000" opacity="0.05"/>
<path d="M31.2 0v14.7h14.7z" fill="#939393"/>
<rect x="0" y="60" width="45.9" height="0.7" fill="#d2cfcf"/><rect x="11" y="19.9" width="23.1" height="1" fill="#5e5e5e"/><rect x="11" y="23.0" width="23.1" height="1" fill="#5e5e5e"/><rect x="11" y="25.9" width="12" height="1" fill="#5e5e5e"/><rect x="11" y="29.9" width="23.1" height="1" fill="#5e5e5e"/><rect x="11" y="33.1" width="20" height="1" fill="#a3a3a3"/><rect x="11" y="35.6" width="12" height="1" fill="#a3a3a3"/><rect x="11" y="38.8" width="23.1" height="1" fill="#5e5e5e"/><rect x="11" y="41.9" width="17.1" height="1" fill="#5e5e5e"/></svg>
<div class="t" style="left:59px;width:300px;text-align:center;top:426px;color:#fff;font-weight:normal;transform:scaleX(0.9696);transform-origin:150px 0;">CellCounts5L_</div>
<div class="t" style="left:59px;width:300px;text-align:center;top:444px;color:#fff;font-weight:normal;transform:scaleX(0.9493);transform-origin:150px 0;">AB_01-N...-01.fcs</div>
<div class="r" style="left:272px;top:351px;width:124px;height:114px;background:#3daee9;"></div>
<svg class="r" style="left:311px;top:356px" width="47" height="62" viewBox="0 0 47 62"><defs><linearGradient id="pg" x1="0" y1="0" x2="0" y2="1"><stop offset="0" stop-color="#f2f2f2"/><stop offset="1" stop-color="#ececec"/></linearGradient></defs>
<path d="M0 0h31.2l14.7 14.7V60.7H0z" fill="url(#pg)"/>
<path d="M31.2 14.7h14.7v8z" fill="#000" opacity="0.05"/>
<path d="M31.2 0v14.7h14.7z" fill="#939393"/>
<rect x="0" y="60" width="45.9" height="0.7" fill="#d2cfcf"/><rect x="11" y="19.9" width="23.1" height="1" fill="#5e5e5e"/><rect x="11" y="23.0" width="23.1" height="1" fill="#5e5e5e"/><rect x="11" y="25.9" width="12" height="1" fill="#5e5e5e"/><rect x="11" y="29.9" width="23.1" height="1" fill="#5e5e5e"/><rect x="11" y="33.1" width="20" height="1" fill="#a3a3a3"/><rect x="11" y="35.6" width="12" height="1" fill="#a3a3a3"/><rect x="11" y="38.8" width="23.1" height="1" fill="#5e5e5e"/><rect x="11" y="41.9" width="17.1" height="1" fill="#5e5e5e"/></svg>
<div class="t" style="left:184px;width:300px;text-align:center;top:426px;color:#fff;font-weight:normal;transform:scaleX(0.9696);transform-origin:150px 0;">CellCounts5L_</div>
<div class="t" style="left:184px;width:300px;text-align:center;top:444px;color:#fff;font-weight:normal;transform:scaleX(0.9493);transform-origin:150px 0;">AB_01-N...-01.fcs</div>
<div class="r" style="left:398px;top:351px;width:122px;height:114px;background:#3daee9;"></div>
<svg class="r" style="left:436px;top:356px" width="47" height="62" viewBox="0 0 47 62"><defs><linearGradient id="pg" x1="0" y1="0" x2="0" y2="1"><stop offset="0" stop-color="#f2f2f2"/><stop offset="1" stop-color="#ececec"/></linearGradient></defs>
<path d="M0 0h31.2l14.7 14.7V60.7H0z" fill="url(#pg)"/>
<path d="M31.2 14.7h14.7v8z" fill="#000" opacity="0.05"/>
<path d="M31.2 0v14.7h14.7z" fill="#939393"/>
<rect x="0" y="60" width="45.9" height="0.7" fill="#d2cfcf"/><rect x="11" y="19.9" width="23.1" height="1" fill="#5e5e5e"/><rect x="11" y="23.0" width="23.1" height="1" fill="#5e5e5e"/><rect x="11" y="25.9" width="12" height="1" fill="#5e5e5e"/><rect x="11" y="29.9" width="23.1" height="1" fill="#5e5e5e"/><rect x="11" y="33.1" width="20" height="1" fill="#a3a3a3"/><rect x="11" y="35.6" width="12" height="1" fill="#a3a3a3"/><rect x="11" y="38.8" width="23.1" height="1" fill="#5e5e5e"/><rect x="11" y="41.9" width="17.1" height="1" fill="#5e5e5e"/></svg>
<div class="t" style="left:309px;width:300px;text-align:center;top:426px;color:#fff;font-weight:normal;transform:scaleX(0.9696);transform-origin:150px 0;">CellCounts5L_</div>
<div class="t" style="left:309px;width:300px;text-align:center;top:444px;color:#fff;font-weight:normal;transform:scaleX(0.9493);transform-origin:150px 0;">AB_01-N...-01.fcs</div>
<div class="r" style="left:178px;top:140px;width:61px;height:34px;box-shadow:0 1px 2px 0.5px rgba(0,0,0,0.4);background:#fff"><svg width="61" height="34" viewBox="0 0 61 34" style="display:block"><rect width="61" height="2.6" fill="#dfe4d9"/><rect y="2.6" width="61" height="2.3" fill="#4d62ad"/><rect x="18" y="8.3" width="25" height="1.7" fill="#333" opacity="0.55"/>
<rect x="22.5" y="12.2" width="16" height="0.6" fill="#999" opacity="0.45"/>
<rect x="28" y="14.6" width="5" height="2" rx="1" fill="#2f45a0"/>
<rect x="9.5" y="20" width="42.5" height="15" fill="none" stroke="#4563b5" stroke-width="0.9"/>
<rect x="9.3" y="19.8" width="43" height="1.3" fill="#4a66b8"/>
<rect x="9.5" y="21" width="11.5" height="11.6" fill="none" stroke="#4260b4" stroke-width="0.9"/>
<path d="M30 30.5c5-1 12-2 21-4.5v2c-8 2-14 3.5-21 4z" fill="#8fb4ec" opacity="0.9"/>
<path d="M25.3 34c0.5-2.5 2-4.2 5-4.6 2-0.3 3-0.2 2.5 1-0.6 1.6-3 2.2-4.5 3.6z" fill="#5ccc5a"/>
<circle cx="28.4" cy="31.8" r="0.95" fill="#e8452c"/></svg></div>
<div class="r" style="left:303px;top:140px;width:61px;height:34px;box-shadow:0 1px 2px 0.5px rgba(0,0,0,0.4);background:#fff"><svg width="61" height="34" viewBox="0 0 61 34" style="display:block"><rect width="61" height="2.6" fill="#dfe4d9"/><rect y="2.6" width="61" height="2.3" fill="#4d62ad"/><rect x="0" y="4.9" width="3" height="29.1" fill="#2c4ba8"/>
<rect x="0" y="4.9" width="21" height="1.6" fill="#2c4ba8"/>
<rect x="20.5" y="4.9" width="0.8" height="29" fill="#e3e7f2"/>
<rect x="3" y="21.8" width="18" height="1.6" fill="#5f7cc2"/>
<rect x="0" y="33" width="61" height="1" fill="#4a62b4"/>
<g fill="#555" opacity="0.55"><rect x="23" y="7.8" width="7" height="0.5"/><rect x="24" y="9.4" width="4" height="0.5"/>
<rect x="23" y="11.6" width="17" height="0.5"/>
<rect x="24.5" y="13.4" width="6" height="0.5"/><rect x="24.5" y="14.6" width="6" height="0.5"/><rect x="24.5" y="15.8" width="6" height="0.5"/>
<rect x="23" y="17.6" width="19" height="0.5"/></g></svg></div>
<div class="r" style="left:428px;top:140px;width:61px;height:34px;box-shadow:0 1px 2px 0.5px rgba(0,0,0,0.4);background:#fff"><svg width="61" height="34" viewBox="0 0 61 34" style="display:block"><rect width="61" height="2.6" fill="#dfe4d9"/><rect y="2.6" width="61" height="2.3" fill="#4d62ad"/><rect x="0" y="4.9" width="3" height="29.1" fill="#2c4ba8"/>
<rect x="0" y="4.9" width="21" height="1.6" fill="#2c4ba8"/>
<rect x="20.5" y="4.9" width="0.8" height="29" fill="#e3e7f2"/>
<rect x="3" y="21.8" width="18" height="1.6" fill="#5f7cc2"/>
<rect x="0" y="33" width="61" height="1" fill="#4a62b4"/>
<g fill="#555" opacity="0.55"><rect x="23" y="7.8" width="7" height="0.5"/><rect x="24" y="9.4" width="4" height="0.5"/>
<rect x="23" y="11.6" width="17" height="0.5"/>
<rect x="24.5" y="13.4" width="6" height="0.5"/><rect x="24.5" y="14.6" width="6" height="0.5"/><rect x="24.5" y="15.8" width="6" height="0.5"/>
<rect x="23" y="17.6" width="19" height="0.5"/></g><rect x="9" y="5.3" width="7" height="5" fill="#fff" stroke="#ddd" stroke-width="0.3"/><rect x="11" y="5.5" width="3" height="0.8" fill="#e56"/></svg></div>
<div class="t" style="left:153.60px;top:764px;color:#232629;font-weight:normal;transform:scaleX(0.9927);transform-origin:0 0;">Name:</div>
<div class="t" style="left:160.20px;top:804px;color:#232629;font-weight:normal;transform:scaleX(0.9886);transform-origin:0 0;">Filter:</div>
<div class="r" style="left:203px;top:758px;width:1091px;height:33px;background:#ffffff;box-sizing:border-box;border:1px solid #c9cacc;border-radius:5px"></div>
<div class="r" style="left:203px;top:798px;width:1091px;height:33px;background:#ffffff;box-sizing:border-box;border:1px solid #c9cacc;border-radius:5px"></div>
<div class="r" style="left:209px;top:760px;width:1006.5px;height:30px;overflow:hidden"><div class="t" style="right:0;top:5px;color:#232629;transform:scaleX(0.9759);transform-origin:100% 0">"CellCounts5L_AB_01-NY009_02.fcs" "CellCounts5L_AB_01-INF187-Cord.fcs" "CellCounts5L_AB_01-ND006-01.fcs" "CellCounts5L_AB_01-ND050-01.fcs" "CellCounts5L_AB_01-NY068-01.fcs"</div></div>
<div class="t" style="left:211.10px;top:805px;color:#232629;font-weight:normal;transform:scaleX(0.9592);transform-origin:0 0;">All Files</div>
<svg class="r" style="left:1224px;top:767px" width="13" height="15" viewBox="0 0 13 15"><path d="M3.5 1.5L1 4.2l2.5 2.7" fill="none" stroke="#232629" stroke-width="1.1"/><path d="M1.3 4.2h5.5a4.6 4.6 0 0 1 0 9.2H5" fill="none" stroke="#232629" stroke-width="1.1"/></svg>
<svg class="r" style="left:1249px;top:768px" width="18" height="13" viewBox="0 0 18 13"><path d="M6.5 0H17v13H6.5L0 6.5z" fill="#232629"/><path d="M8 4l5 5M13 4l-5 5" stroke="#fff" stroke-width="1.5"/></svg>
<svg class="r" style="left:1249px;top:808px" width="18" height="13" viewBox="0 0 18 13"><path d="M6.5 0H17v13H6.5L0 6.5z" fill="#232629"/><path d="M8 4l5 5M13 4l-5 5" stroke="#fff" stroke-width="1.5"/></svg>
<svg class="r" style="left:1276px;top:771px" width="12" height="8" viewBox="0 0 12 8"><path d="M0.8 1.2l5.2 5.2 5.2-5.2" fill="none" stroke="#232629" stroke-width="1.1"/></svg>
<svg class="r" style="left:1276px;top:811px" width="12" height="8" viewBox="0 0 12 8"><path d="M0.8 1.2l5.2 5.2 5.2-5.2" fill="none" stroke="#232629" stroke-width="1.1"/></svg>
<div class="r" style="left:1113px;top:838px;width:86px;height:34px;background:#d6ebf7;box-sizing:border-box;border:1px solid #88c2e4;border-radius:5px;box-shadow:0 1px 1px rgba(0,0,0,0.1)"></div>
<div class="r" style="left:1207px;top:838px;width:86px;height:34px;background:#fafafa;box-sizing:border-box;border:1px solid #c6c7c9;border-radius:5px;box-shadow:0 1px 1px rgba(0,0,0,0.08)"></div>
<svg class="r" style="left:1129px;top:850px" width="15" height="12" viewBox="0 0 15 12"><path d="M1 6.2l4 4.3L14 1" fill="none" stroke="#232629" stroke-width="1.3"/></svg>
<div class="t" style="left:1149.30px;top:846px;color:#232629;font-weight:normal;transform:scaleX(1.0);transform-origin:0 0;">Open</div>
<svg class="r" style="left:1219px;top:849px" width="15" height="15" viewBox="0 0 15 15"><circle cx="7.5" cy="7.5" r="6.2" fill="none" stroke="#232629" stroke-width="1.3"/><path d="M3.2 3.2l8.6 8.6" stroke="#232629" stroke-width="1.3"/></svg>
<div class="t" style="left:1240.40px;top:846px;color:#232629;font-weight:normal;transform:scaleX(0.9427);transform-origin:0 0;">Cancel</div>
</div>
</body></html>
